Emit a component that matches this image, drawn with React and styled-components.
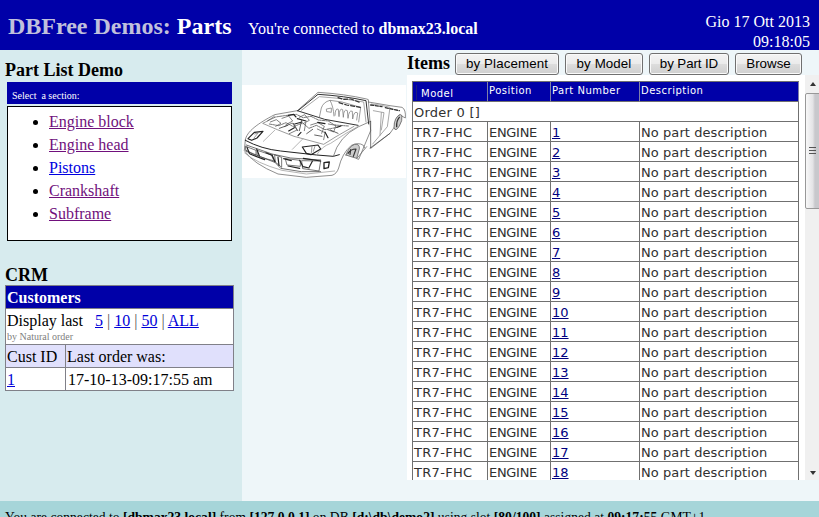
import React from "react";
import styled, { createGlobalStyle } from "styled-components";

const GlobalStyle = createGlobalStyle`
  * { box-sizing: border-box; }
  html, body { margin: 0; overflow: hidden; }
  body { font-family: "Liberation Serif", "Times New Roman", serif; font-size: 16px; color: #000; }
  a { color: inherit; }
`;

const Page = styled.div`
  width: 819px;
  height: 517px;
  overflow: hidden;
  display: flex;
  flex-direction: column;
  background: #eef6f9;
`;

const Header = styled.header`
  flex: none;
  height: 50px;
  background: #0000a8;
  color: #fff;
  display: flex;
  padding: 0 9px 0 8px;
`;
const Brand = styled.h1`
  margin: 0;
  width: 240px;
  font-size: 24px;
  line-height: 28px;
  padding-top: 12px;
  white-space: nowrap;
  span { color: #c0c0dc; }
`;
const Connection = styled.div`
  flex: 1;
  padding-top: 19px;
  line-height: 20px;
`;
const Clock = styled.div`
  padding-top: 12px;
  line-height: 20px;
  text-align: right;
`;

const Body = styled.main`
  flex: none;
  height: 451px;
  display: flex;
`;
const Sidebar = styled.aside`
  width: 242px;
  background: #d7ebee;
  padding: 10px 0 0 5px;
`;
const Heading = styled.h2`
  margin: 0;
  font-size: 18px;
  line-height: 20px;
`;
const SectionBar = styled.div`
  margin: 2px 0 2px 2px;
  width: 225px;
  height: 22px;
  background: #0000a8;
  color: #fff;
  font-size: 10px;
  line-height: 28px;
  padding-left: 5px;
  white-space: pre;
`;
const SectionList = styled.ul`
  margin: 0 0 24px 2px;
  width: 225px;
  height: 135px;
  border: 1px solid #000;
  background: #fff;
  padding: 3px 0 0 41px;
`;
const SectionItem = styled.li`
  line-height: 23px;
  a { color: ${(p) => (p.$fresh ? "#0000e0" : "#70107c")}; }
`;

const Customers = styled.section`
  width: 229px;
  border: 1px solid #808088;
  background: #fff;
`;
const CustomersTitle = styled.div`
  height: 22px;
  background: #0000a8;
  color: #fff;
  font-weight: bold;
  line-height: 24px;
  padding-left: 1px;
`;
const CustomersFilter = styled.div`
  height: 36px;
  border-top: 1px solid #808088;
  padding: 3px 0 0 1px;
  line-height: 18px;
  white-space: pre;
  a { color: #0000d8; }
  i { font-style: normal; color: #555; }
`;
const OrderNote = styled.div`
  font-size: 10px;
  line-height: 13px;
  color: #808080;
`;
const CustomerRow = styled.div`
  height: 23px;
  border-top: 1px solid #808088;
  display: grid;
  grid-template-columns: 59px 1fr;
  line-height: 24px;
  background: ${(p) => (p.$head ? "#e0e0fc" : "#fff")};
  span { height: 22px; padding-left: 1px; }
  span + span {
    border-left: 1px solid #808088;
    padding-left: ${(p) => (p.$head ? 1 : 2)}px;
  }
  a { color: #0000d8; }
`;

const Gallery = styled.div`
  width: 165px;
  padding-top: 35px;
  svg { display: block; background: #fff; }
`;

const Items = styled.section`
  flex: 1;
  min-width: 0;
`;
const Toolbar = styled.div`
  height: 25px;
  display: flex;
  align-items: center;
`;
const ToolbarTitle = styled(Heading)`
  width: 48px;
`;
const Button = styled.button`
  width: ${(p) => p.$width}px;
  height: 22px;
  margin: 2px 6px 0 0;
  padding: 0;
  flex: none;
  border: 1px solid #707070;
  border-radius: 3px;
  background: linear-gradient(#f4f4f4 0%, #ebebeb 48%, #dddddd 50%, #cfcfcf 100%);
  box-shadow: inset 0 0 0 1px #fafafa;
  font: 13.33px "Liberation Sans", Arial, sans-serif;
  letter-spacing: ${(p) => p.$spacing || "0"};
  color: #000;
`;
const Viewport = styled.div`
  height: 405px;
  background: #fff;
  display: flex;
  justify-content: space-between;
  overflow: hidden;
`;
const Table = styled.div`
  width: 387px;
  height: 420px;
  margin: 6px 0 0 5px;
  border: 1px solid #707070;
  border-right: 0;
  font: 13px "DejaVu Sans", Verdana, sans-serif;
  color: #303030;
`;
const Row = styled.div`
  display: grid;
  grid-template-columns: ${(p) => (p.$span ? "1fr" : "75px 63px 89px 159px")};
  height: 20px;
  line-height: 21px;
  white-space: nowrap;
`;
const Cell = styled.div`
  height: 20px;
  border-right: 1px solid #707070;
  border-bottom: 1px solid #707070;
  padding-left: 1px;
  letter-spacing: ${(p) => p.$spacing || "0"};
  a { color: #000080; }
`;
const HeadCell = styled(Cell)`
  background: #0000a8;
  color: #fff;
  font-size: 10px;
  line-height: 18px;
  letter-spacing: 0.5px;
  border-right-color: #8080a8;
`;
const ModelHead = styled.div`
  margin: 3px 0 0 2px;
  padding-left: 4px;
  height: 15px;
  border-left: 1px solid #1c1c80;
  line-height: 17px;
`;

const ScrollTrack = styled.div`
  width: 14px;
  background: #f0f0f0;
  display: flex;
  flex-direction: column;
  overflow: hidden;
  svg { display: block; flex: none; }
`;
const ScrollThumb = styled.div`
  width: 17px;
  height: 116px;
  flex: none;
  border: 1px solid #989898;
  border-radius: 2px;
  background: linear-gradient(90deg, #f8f8f8, #e4e4e6 45%, #c8c8cc 60%, #c8c8cc);
  padding: 52px 0 0 3px;
`;
const TrackGap = styled.div`
  flex: 1;
`;

const Footer = styled.footer`
  flex: none;
  height: 16px;
  background: #a6d5d9;
  padding: 9px 0 0 5px;
  line-height: 15px;
  font-size: 13.6px;
  white-space: nowrap;
  overflow: hidden;
`;

function CarDrawing() {
  return (
    <svg width="164" height="93" viewBox="12 15 492 279" fill="none" stroke="#666" strokeWidth="2.2" strokeLinejoin="round" strokeLinecap="round">
      <path d="M22 180C25 155 60 130 110 104L178 92L240 37Q320 42 386 57L391 59L398 152L362 238L356 236L386 200" />
      <path d="M22 180L19 212Q45 251 120 282L205 292L282 286Q296 282 302 264Q312 220 340 196Q362 186 376 196L380 204" />
      <path d="M22 181Q70 207 128 213L236 225L286 229L304 224" stroke="#222" strokeWidth="3" />
      <path d="M286 229Q302 170 362 140L398 124" />
      <path d="M236 225Q250 200 278 190L324 160L362 138" stroke="#999" />
      <path d="M180 92L240 43Q320 48 384 62L392 132M178 92L260 118L360 136" stroke="#333" strokeWidth="3" />
      <path d="M190 91L244 50Q315 54 377 66L384 126" stroke="#888" />
      <path d="M391 66L456 77L492 82Q504 88 502 114L484 104Q472 112 470 140L456 160L396 204" />
      <path d="M398 124V205L456 160" stroke="#444" />
      <path d="M400 72L430 76L456 82L448 140L404 192M430 98L426 166M406 92L438 98L430 150" stroke="#888" />
      <path d="M398 75l34 5M442 83l42 9" stroke="#333" strokeWidth="4" strokeDasharray="9 5" />
      <path d="M486 104Q468 112 468 142Q472 158 484 138Q494 122 492 108Z" fill="#ccc" stroke="#555" />
      <path d="M484 112Q475 122 476 140" stroke="#333" strokeWidth="4" />
      <path d="M324 225Q332 200 350 193Q366 191 364 207L356 235Q338 230 324 225Z" fill="#ccc" stroke="#555" />
      <path d="M330 220Q338 207 354 207L346 229M338 209L336 223" stroke="#333" strokeWidth="3.5" />
      <path d="M30 176L49 157L75 154L57 174L41 181Z M193 201L240 195L248 207L219 224L205 220Z" stroke="#222" strokeWidth="3.5" />
      <path d="M50 162L61 158L48 174M222 198L220 219M231 198L226 214" stroke="#777" />
      <path d="M110 108L89 123L74 130L118 149L168 169L257 193L294 170L348 139" stroke="#777" />
      <path d="M110 151L76 184M195 176L163 208" stroke="#999" />
      <path d="M89 122l24-11 26-4 36-4 20 10 24-4 22 11 30 3 18 12 42 3M94 132l28 5 22-9 22 12 28-11 19 16 22-9 26 13 32-6" stroke="#444" strokeDasharray="9 3 4 3" />
      <path d="M97 126l18-7 14 11-16 9M132 115l20-7 12 15-20 11M139 140l24-11 14 21-23 11M184 112l16-8 14 17-19 10M203 129l-4 23M218 135l22-7 19 11-8 21M271 132l23 4-7 20-18-7M238 147l23 11-4 21" stroke="#555" />
      <path d="M151 106l16-3 7 8M178 116l26 7M170 132l22-6M152 153l17-10M180 167l9-10M239 127l22 4M261 156l9 17M296 142l13-4" stroke="#222" strokeWidth="3.5" />
      <path d="M166 130l13 22M191 121l-7 31M224 148l-18 13M230 165l22 4M277 150l23 10M124 145l25-9" stroke="#444" strokeWidth="2.5" />
      <path d="M244 112L250 84Q256 66 276 61L312 66L368 82L362 126M266 87l14-3v13l-13-2ZM276 61Q286 78 288 108" stroke="#777" />
      <path d="M291 106Q292 82 301 88L303 110Q304 82 314 89L316 112Q317 84 328 92L330 115Q333 88 343 94L344 117Q348 90 359 99L356 120" stroke="#777" />
      <path d="M300 53l16 5 22-1 30 11M303 68l23 7 41 7" stroke="#333" strokeWidth="3.5" strokeDasharray="12 6" />
      <path d="M25 195L102 222L158 234L248 240M24 211Q70 234 106 242L128 265L190 275L248 275" stroke="#555" strokeWidth="2.5" />
      <path d="M23 199l31 12v15l-29-12ZM58 211l42 14 10 22-51-20ZM111 225l20 7v30l-18-15ZM143 236l44 5v18l-39-4ZM192 242l56 1-5 30-48-7Z" stroke="#444" strokeWidth="2.2" />
      <path d="M27 202l7 18M56 207l8 20M84 218l18 8M102 224l9 21M120 232l3 24M137 236l23 6M185 241l10 19 18 4M223 244l-9 17M36 222l44 17M150 258l35 7M196 235l52 8" stroke="#222" strokeWidth="3.5" />
      <path d="M258 248L274 246L271 263L258 266Z" stroke="#222" strokeWidth="4" />
      <path d="M20 219Q54 249 132 271L205 282L290 273" stroke="#999" />
    </svg>
  );
}

const sections = ["Engine block", "Engine head", "Pistons", "Crankshaft", "Subframe"];
const parts = Array.from({ length: 18 }, (_, i) => i + 1);

export default function App() {
  return (
    <Page>
      <GlobalStyle />
      <Header>
        <Brand><span>DBFree Demos:</span> Parts</Brand>
        <Connection>You're connected to <b>dbmax23.local</b></Connection>
        <Clock>Gio 17 Ott 2013<br />09:18:05</Clock>
      </Header>
      <Body>
        <Sidebar>
          <Heading>Part List Demo</Heading>
          <SectionBar>Select  a section:</SectionBar>
          <SectionList>
            {sections.map((s) => (
              <SectionItem key={s} $fresh={s === "Pistons"}><a href="#">{s}</a></SectionItem>
            ))}
          </SectionList>
          <Heading>CRM</Heading>
          <Customers>
            <CustomersTitle>Customers</CustomersTitle>
            <CustomersFilter>
              Display last{"   "}<a href="#">5</a> <i>|</i> <a href="#">10</a> <i>|</i> <a href="#">50</a> <i>|</i> <a href="#">ALL</a>
              <OrderNote>by Natural order</OrderNote>
            </CustomersFilter>
            <CustomerRow $head><span>Cust ID</span><span>Last order was:</span></CustomerRow>
            <CustomerRow><span><a href="#">1</a></span><span>17-10-13-09:17:55 am</span></CustomerRow>
          </Customers>
        </Sidebar>
        <Gallery><CarDrawing /></Gallery>
        <Items>
          <Toolbar>
            <ToolbarTitle>Items</ToolbarTitle>
            <Button $width={104} $spacing="0.1px">by Placement</Button>
            <Button $width={78} $spacing="0.1px">by Model</Button>
            <Button $width={80} $spacing="-0.1px">by Part ID</Button>
            <Button $width={67}>Browse</Button>
          </Toolbar>
          <Viewport>
            <Table>
              <Row>
                <HeadCell><ModelHead>Model</ModelHead></HeadCell>
                <HeadCell>Position</HeadCell>
                <HeadCell>Part Number</HeadCell>
                <HeadCell>Description</HeadCell>
              </Row>
              <Row $span><Cell $spacing="0.25px">Order 0 []</Cell></Row>
              {parts.map((n) => (
                <Row key={n}>
                  <Cell $spacing="0.3px">TR7-FHC</Cell>
                  <Cell $spacing="-0.3px">ENGINE</Cell>
                  <Cell><a href="#">{n}</a></Cell>
                  <Cell $spacing="0.07px">No part description</Cell>
                </Row>
              ))}
            </Table>
            <ScrollTrack>
              <svg width="14" height="18"><path d="M5 11L8 7L11 11Z" fill="#333" /></svg>
              <ScrollThumb>
                <svg width="8" height="9"><path d="M0 1.5H7M0 4.5H7M0 7.5H7" stroke="#555" /></svg>
              </ScrollThumb>
              <TrackGap />
              <svg width="14" height="17"><path d="M5 8L11 8L8 12Z" fill="#333" /></svg>
            </ScrollTrack>
          </Viewport>
        </Items>
      </Body>
      <Footer>
        You are connected to <b>[dbmax23.local]</b> from <b>[127.0.0.1]</b> on DB <b>[d:\db\demo2]</b> using slot <b>[80/100]</b> assigned at <b>09:17:55</b> GMT+1
      </Footer>
    </Page>
  );
}
